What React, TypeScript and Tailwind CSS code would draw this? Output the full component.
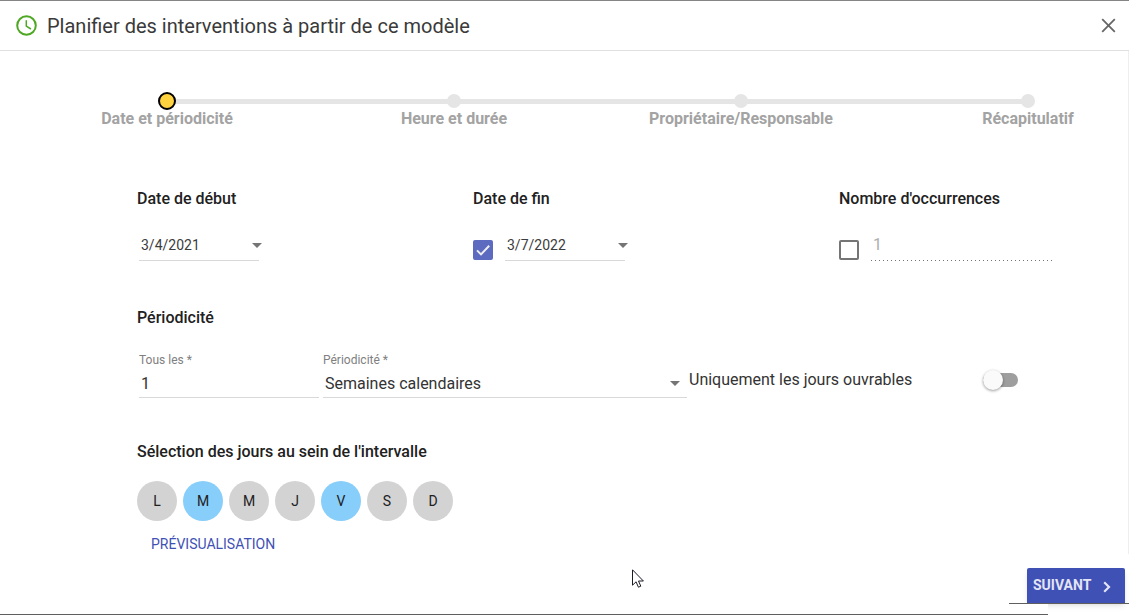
import React, { useState } from 'react';

const STEPS = ['Date et périodicité', 'Heure et durée', 'Propriétaire/Responsable', 'Récapitulatif'];

const DAYS = [
  { id: 'lundi', letter: 'L' },
  { id: 'mardi', letter: 'M' },
  { id: 'mercredi', letter: 'M' },
  { id: 'jeudi', letter: 'J' },
  { id: 'vendredi', letter: 'V' },
  { id: 'samedi', letter: 'S' },
  { id: 'dimanche', letter: 'D' },
];

const Caret: React.FC = () => (
  <svg className="h-[5px] w-[10px]" viewBox="0 0 10 5" fill="#757575" aria-hidden="true">
    <path d="M0 0h10L5 5z" />
  </svg>
);

interface DateFieldProps {
  label: string;
  value: string;
  onChange: (value: string) => void;
}

const DateField: React.FC<DateFieldProps> = ({ label, value, onChange }) => (
  <div className="flex items-center">
    <input
      type="text"
      aria-label={label}
      value={value}
      onChange={e => onChange(e.target.value)}
      className="h-8 w-[120px] border-b border-[#d9d9d9] px-[2px] text-sm text-[#3c3c3c] outline-none"
    />
    <button type="button" aria-label={`Ouvrir le calendrier : ${label}`} className="-ml-[7px] flex h-8 items-center">
      <Caret />
    </button>
  </div>
);

interface CheckboxProps {
  label: string;
  checked: boolean;
  onChange: (checked: boolean) => void;
}

const Checkbox: React.FC<CheckboxProps> = ({ label, checked, onChange }) => (
  <span className="mb-px grid size-5 shrink-0">
    <input
      type="checkbox"
      aria-label={label}
      checked={checked}
      onChange={e => onChange(e.target.checked)}
      className="col-start-1 row-start-1 size-5 appearance-none rounded-[2px] border-2 border-[#757575] checked:border-[#5c6bc0] checked:bg-[#5c6bc0]"
    />
    {checked && (
      <svg className="pointer-events-none col-start-1 row-start-1 size-5" viewBox="0 0 20 20" fill="none" stroke="#eeeeee" strokeWidth="2" aria-hidden="true">
        <path d="M4 10.4l4 4 8.2-8.6" />
      </svg>
    )}
  </span>
);

export default function App() {
  const [startDate, setStartDate] = useState('3/4/2021');
  const [endDate, setEndDate] = useState('3/7/2022');
  const [useEndDate, setUseEndDate] = useState(true);
  const [useCount, setUseCount] = useState(false);
  const [count, setCount] = useState('1');
  const [every, setEvery] = useState('1');
  const [workingDays, setWorkingDays] = useState(false);
  const [selectedDays, setSelectedDays] = useState(['mardi', 'vendredi']);

  const toggleDay = (id: string) => {
    setSelectedDays(selectedDays.includes(id) ? selectedDays.filter(d => d !== id) : [...selectedDays, id]);
  };

  return (
    <div className="relative flex min-h-screen flex-col border-t border-[#858585] bg-white font-[Roboto,sans-serif] text-base text-[#212121]">
      <header className="flex h-[50px] items-center border-b border-[#e0e0e0] pr-3 pl-4">
        <svg className="size-[21px]" viewBox="0 0 21 21" fill="none" stroke="#4ea824" aria-hidden="true">
          <circle cx="10.5" cy="10.5" r="9.3" strokeWidth="2" />
          <path d="M10.3 5.2v6l4.6 2.8" strokeWidth="1.5" />
        </svg>
        <h1 className="ml-[10px] flex-1 text-xl text-[#3a3a3a]">Planifier des interventions à partir de ce modèle</h1>
        <button type="button" aria-label="Fermer">
          <svg className="size-[17px]" viewBox="0 0 17 17" fill="none" stroke="#666666" strokeWidth="1.8" aria-hidden="true">
            <path d="M2.2 2.2l12.6 12.6M14.8 2.2L2.2 14.8" />
          </svg>
        </button>
      </header>

      <main className="border-r border-[#eeeeee]">
        <nav aria-label="Étapes" className="pt-10 pr-[92px] pl-[159px]">
          <ol className="relative flex justify-between">
            <li aria-hidden="true" className="absolute top-2 right-2 left-2 h-[5px] bg-[#e5e5e5]" />
            {STEPS.map((step, i) => (
              <li key={step} className="relative flex w-4 flex-col items-center">
                <span className="flex h-5 items-center">
                  {i === 0 ? (
                    <span className="size-[18px] rounded-full border-2 border-black bg-[#ffd23f]" />
                  ) : (
                    <span className="size-[14px] rounded-full bg-[#e5e5e5]" />
                  )}
                </span>
                <span className="leading-4 font-bold whitespace-nowrap text-[#a3a3a3]">{step}</span>
              </li>
            ))}
          </ol>
        </nav>

        <form className="pt-[60px] pl-[137px]">
          <div className="grid grid-cols-[336fr_366fr_289fr]">
            <section>
              <h2 className="font-medium">Date de début</h2>
              <div className="mt-[18px] pl-[2px]">
                <DateField label="Date de début" value={startDate} onChange={setStartDate} />
              </div>
            </section>
            <section>
              <h2 className="font-medium">Date de fin</h2>
              <div className="mt-[18px] flex items-end gap-3">
                <Checkbox label="Date de fin" checked={useEndDate} onChange={setUseEndDate} />
                <DateField label="Date de fin" value={endDate} onChange={setEndDate} />
              </div>
            </section>
            <section>
              <h2 className="font-medium">Nombre d'occurrences</h2>
              <div className="mt-[18px] flex items-end gap-3 pr-[74px]">
                <Checkbox label="Nombre d'occurrences" checked={useCount} onChange={setUseCount} />
                <input
                  type="text"
                  aria-label="Nombre d'occurrences"
                  value={count}
                  disabled={!useCount}
                  onChange={e => setCount(e.target.value)}
                  className="h-8 w-full min-w-0 bg-[linear-gradient(to_right,#757575_1px,transparent_1px)] bg-[length:4px_1px] bg-bottom-left bg-repeat-x px-[2px] pb-px text-base outline-none disabled:text-[#adadad]"
                />
              </div>
            </section>
          </div>

          <section className="mt-[45px]">
            <h2 className="font-medium">Périodicité</h2>
            <div className="mt-[22px] flex items-end pr-[110px] pl-[2px]">
              <div className="w-[180px]">
                <label htmlFor="every" className="block text-xs text-[#808080]">Tous les *</label>
                <input
                  id="every"
                  type="text"
                  value={every}
                  onChange={e => setEvery(e.target.value)}
                  className="h-[30px] w-full border-b border-[#d9d9d9] px-[2px] pt-[2px] text-[#333333] outline-none"
                />
              </div>
              <div className="ml-1 flex-1">
                <label htmlFor="period" className="block text-xs text-[#808080]">Périodicité *</label>
                <div className="grid">
                  <select
                    id="period"
                    defaultValue="weeks"
                    className="col-start-1 row-start-1 h-[30px] appearance-none border-b border-[#d9d9d9] px-[2px] pt-[2px] text-[#333333] outline-none"
                  >
                    <option value="days">Jours calendaires</option>
                    <option value="weeks">Semaines calendaires</option>
                    <option value="months">Mois calendaires</option>
                  </select>
                  <span className="pointer-events-none col-start-1 row-start-1 mr-[7px] self-center justify-self-end">
                    <Caret />
                  </span>
                </div>
              </div>
              <label className="mb-[6px] ml-[2px] flex w-[329px] items-center justify-between text-[#333333]">
                Uniquement les jours ouvrables
                <input
                  type="checkbox"
                  role="switch"
                  checked={workingDays}
                  onChange={e => setWorkingDays(e.target.checked)}
                  className="flex h-[14px] w-[35px] appearance-none items-center rounded-full bg-[#9e9e9e] before:size-5 before:shrink-0 before:rounded-full before:bg-[#fafafa] before:shadow-[0_1px_3px_rgba(0,0,0,0.4)] checked:justify-end checked:bg-[#9fa8da] checked:before:bg-[#3f51b5]"
                />
              </label>
            </div>
          </section>

          <section className="mt-[42px]">
            <h2 className="font-medium">Sélection des jours au sein de l'intervalle</h2>
            <div className="mt-[17px] flex gap-[6px]">
              {DAYS.map(day => (
                <button
                  key={day.id}
                  type="button"
                  aria-label={day.id}
                  aria-pressed={selectedDays.includes(day.id)}
                  onClick={() => toggleDay(day.id)}
                  className={`size-10 rounded-full text-sm ${selectedDays.includes(day.id) ? 'bg-[#87cefa]' : 'bg-[#d3d3d3]'}`}
                >
                  {day.letter}
                </button>
              ))}
            </div>
            <button type="button" className="mt-[13px] ml-[6px] block px-2 text-sm text-[#3f51b5] uppercase">
              Prévisualisation
            </button>
          </section>
        </form>
      </main>

      <footer className="mt-auto">
        <div className="flex justify-end pr-1">
          <button type="button" className="flex h-[35px] w-[98px] items-center justify-between rounded-t-[2px] bg-[#3f51b5] pr-[14px] pb-[2px] pl-[6px] text-sm font-bold text-[#e3e5f4] uppercase shadow-md">
            Suivant
            <svg className="mt-1 h-3 w-2" viewBox="0 0 8 12" fill="none" stroke="currentColor" strokeWidth="2.2" aria-hidden="true">
              <path d="M1.2 1.2L6 6l-4.8 4.8" />
            </svg>
          </button>
        </div>
        <div className="relative ml-auto h-px w-[120px] bg-[#5f5f5f]" />
        <div className="relative mr-[81px] h-[11px] border-b border-[#5f5f5f] bg-white" />
      </footer>

      {/* mouse pointer */}
      <svg className="pointer-events-none absolute top-[568px] left-[632px] h-[19px] w-3" viewBox="0 0 12 19" fill="#ffffff" stroke="#1c1c28" aria-hidden="true">
        <path d="M.5 .8v15.4l3.6-3.4 2.3 5.4 2.4-1-2.3-5.2h4.9z" />
      </svg>
    </div>
  );
}
